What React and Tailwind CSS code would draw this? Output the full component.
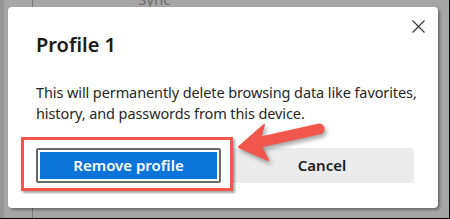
import React from "react";

const ProfileDialog = () => {
  return (
    <div className="absolute left-[8px] top-[7px] w-[430px] h-[201px] bg-white rounded-[4px] shadow-[2px_2px_3px_rgba(0,0,0,0.35)] pl-[28px] pr-[13px] pt-[24px]">
      {/* Header */}
      <div className="flex items-start justify-between">
        <h2 className="text-[20px] leading-[28px] font-semibold text-[#1b1b1b]">
          Profile 1
        </h2>
        <button className="-mt-[11px] w-[13px] h-[13px] flex items-center justify-center text-[#333]">
          <svg width="13" height="13" viewBox="0 0 13 13" fill="none" stroke="currentColor" strokeWidth="1.1">
            <path d="M0.5 0.5L12.5 12.5M12.5 0.5L0.5 12.5" />
          </svg>
        </button>
      </div>

      {/* Body */}
      <p className="mt-[23px] text-[14.5px] leading-[21px] text-[#262626] tracking-[-0.1px]">
        This will permanently delete browsing data like favorites, history, and
        passwords from this device.
      </p>

      {/* Actions */}
      <div className="mt-[24px] flex gap-[9px]">
        <button className="w-[185px] h-[35px] rounded-[2px] border-2 border-[#6a6a6a] p-[2px] bg-white">
          <span className="flex items-center justify-center w-full h-full bg-[#0a74da] text-white text-[15px] font-semibold">
            Remove profile
          </span>
        </button>
        <button className="w-[184px] h-[35px] rounded-[3px] bg-[#ebebeb] text-[#1b1b1b] text-[15px] font-semibold">
          Cancel
        </button>
      </div>
    </div>
  );
};

const App = () => {
  return (
    <div
      className="relative w-[450px] h-[219px] overflow-hidden bg-[#a6a6a6] border-r border-b border-black"
      style={{ fontFamily: '"Noto Sans", "Open Sans", sans-serif' }}
    >
      {/* Background window bits */}
      <div className="absolute left-0 top-0 w-[4px] h-full bg-[#969696]" />
      <div className="absolute left-[32px] top-0 w-[1px] h-full bg-[#7a7a7a]" />
      <div className="absolute left-[138px] top-[-10px] text-[15px] leading-[18px] text-[#6e6e6e]">
        Sync
      </div>

      <ProfileDialog />

      {/* Highlight box */}
      <div className="absolute left-[21px] top-[137px] w-[212px] h-[54px] border-[3px] border-[#f0564b] shadow-[2px_2px_2px_rgba(0,0,0,0.35)]" />

      {/* Arrow */}
      <svg
        className="absolute left-0 top-0"
        width="450"
        height="219"
        viewBox="0 0 450 219"
        style={{ filter: "drop-shadow(2px 3px 2px rgba(0,0,0,0.35))" }}
      >
        <line x1="256" y1="143" x2="319" y2="129" stroke="#f0564b" strokeWidth="11" strokeLinecap="round" />
        <polygon
          points="239,147 264,125 259,142 268,160"
          fill="#f0564b"
          stroke="#f0564b"
          strokeWidth="2"
          strokeLinejoin="round"
        />
      </svg>
    </div>
  );
};

export default App;
